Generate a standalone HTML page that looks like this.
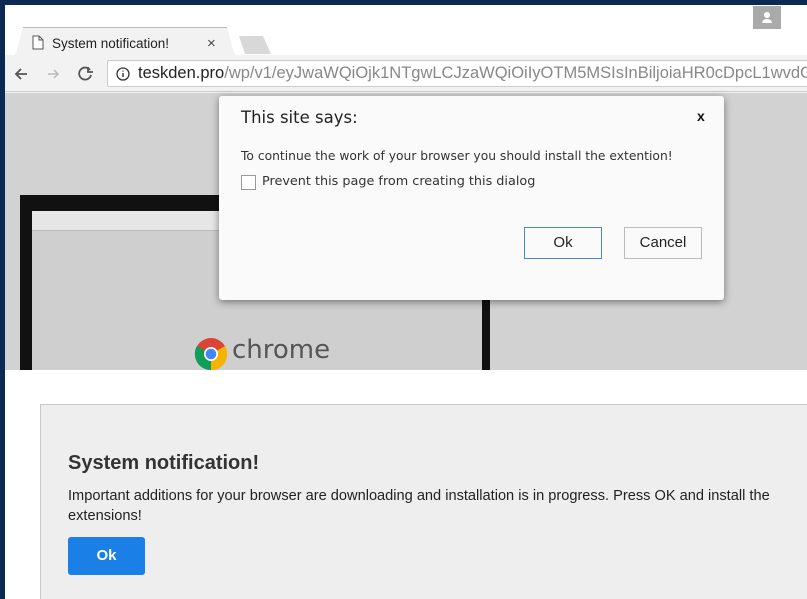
<!DOCTYPE html>
<html><head><style>
*{margin:0;padding:0;box-sizing:border-box}
body{width:807px;height:599px;overflow:hidden;background:#0a2a55;position:relative;font-family:"Liberation Sans",sans-serif}
.win{position:absolute;left:5px;top:5px;right:0;bottom:0;background:#f2f2f2;overflow:hidden}
.tabbar{position:absolute;left:0;top:0;right:0;height:50px;background:#fff}
.tab{position:absolute;left:10px;top:22px;width:220px;height:30px;background:#f2f2f2;border:1px solid #bbb;border-bottom:none;clip-path:polygon(8px 0,212px 0,220px 100%,0 100%)}
.tabtxt{position:absolute;left:47px;top:31px;font-size:13.5px;color:#222}
.tabx{position:absolute;left:202px;top:30px;font-size:15px;color:#444}
.newtab{position:absolute;left:230px;top:31px;width:36px;height:18px;background:#d8d8d8;clip-path:polygon(4px 0,28px 0,36px 100%,10px 100%)}
.prof{position:absolute;left:748px;top:1px;width:28px;height:23px;background:#aaa}
.toolbar{position:absolute;left:0;top:50px;right:0;height:37px;background:#f2f2f2;border-bottom:1px solid #ccc}
.omni{position:absolute;left:102px;top:5px;right:-5px;height:27px;background:#fff;border:1px solid #ccc;border-radius:2px;font-size:16.5px;line-height:25px;padding-left:30px;white-space:nowrap;overflow:hidden;color:#888}
.omni b{font-weight:normal;color:#222}
.page{position:absolute;left:0;top:88px;right:0;bottom:0;background:#d2d2d2}
.laptop{position:absolute;left:15px;top:102px;width:470px;height:200px;background:#111}
.screen{position:absolute;left:12px;top:16px;right:8px;bottom:0;background:#cfcfcf}
.white{position:absolute;left:0;top:277px;right:0;bottom:0;background:#fff}
.box{position:absolute;left:35px;top:34px;right:-5px;bottom:-5px;background:#eee;border:1px solid #c8c8c8}
.box h1{position:absolute;left:27px;top:47px;font-size:20px;font-weight:bold;color:#333}
.box p{position:absolute;left:27px;top:81px;right:5px;font-size:14.6px;line-height:20px;color:#222}
.okb{position:absolute;left:27px;top:132px;width:77px;height:38px;background:#1a7fe6;border-radius:3px;color:#fff;font-weight:bold;font-size:15px;text-align:center;line-height:38px}
.dlg{position:absolute;left:219px;top:96px;width:505px;height:204px;background:#fafafa;border-radius:3px;box-shadow:0 2px 8px rgba(0,0,0,.45);font-family:"DejaVu Sans","Liberation Sans",sans-serif}
.dlg .t{position:absolute;left:22px;top:12px;font-size:16.5px;color:#222}
.dlg .x{position:absolute;left:478px;top:12px;font-size:14px;font-weight:bold;font-family:"Liberation Sans";color:#111}
.dlg .m{position:absolute;left:22px;top:53px;font-size:12.3px;color:#333}
.dlg .cb{position:absolute;left:22px;top:79px;width:15px;height:15px;border:1px solid #999;background:#fff}
.dlg .cl{position:absolute;left:43px;top:78px;font-size:12.8px;color:#333}
.btn{position:absolute;top:131px;height:32px;width:78px;border:1px solid #bbb;background:#fafafa;font-family:"Liberation Sans";font-size:15px;text-align:center;line-height:30px;color:#222}
</style></head><body>
<div class="win">
 <div class="tabbar">
  <div class="tab"></div>
  <svg style="position:absolute;left:27px;top:30px" width="12" height="15"><path d="M1 1h6l4 4v9H1z M7 1v4h4" fill="#fff" stroke="#555"/></svg>
  <div class="tabtxt">System notification!</div>
  <div class="tabx">×</div>
  <div class="newtab"></div>
  <div class="prof"><svg width="28" height="23"><circle cx="14" cy="9" r="3" fill="#fff"/><path d="M9 17a5 4 0 0 1 10 0z" fill="#fff"/></svg></div>
 </div>
 <div class="toolbar">
  <svg style="position:absolute;left:8px;top:10px" width="80" height="18"><path d="M14 9H3M8 4L3 9l5 5" stroke="#555" stroke-width="1.8" fill="none"/><path d="M35 9h10M41 5l4 4-4 4" stroke="#bbb" stroke-width="1.5" fill="none"/><path d="M80 5a6 6 0 1 0 1 5" stroke="#555" stroke-width="1.8" fill="none" transform="translate(-3,0)"/><path d="M75 2v5h5" stroke="#555" stroke-width="1.8" fill="none"/></svg>
  <div class="omni"><svg style="position:absolute;left:8px;top:6px" width="14" height="14"><circle cx="7" cy="7" r="6" stroke="#333" stroke-width="1.3" fill="none"/><path d="M7 6v4M7 3.5v1" stroke="#333" stroke-width="1.4"/></svg><b>teskden.pro</b>/wp/v1/eyJwaWQiOjk1NTgwLCJzaWQiOiIyOTM5MSIsInBiljoiaHR0cDpcL1wvdGRzLm1lZC</div>
 </div>
 <div class="page">
  <div class="laptop"><div class="screen">
   <div style="height:20px;background:#e6e6e6;border-bottom:1px solid #bbb"></div>
   <svg style="position:absolute;left:162px;top:126px" width="34" height="34" viewBox="0 0 34 34"><circle cx="17" cy="17" r="16" fill="#db4437"/><path d="M17 17L3 25A16 16 0 0 0 17 33z" fill="#0f9d58"/><path d="M3 25A16 16 0 0 1 3 9L17 17z" fill="#0f9d58"/><path d="M17 17L31 9A16 16 0 0 1 17 33z" fill="#f4b400"/><circle cx="17" cy="17" r="7" fill="#fff"/><circle cx="17" cy="17" r="5.3" fill="#4285f4"/></svg>
   <div style="position:absolute;left:200px;top:124px;font-size:26px;color:#555;font-family:'DejaVu Sans',sans-serif">chrome</div>
  </div></div>
  <div class="white">
   <div class="box">
    <h1>System notification!</h1>
    <p>Important additions for your browser are downloading and installation is in progress. Press OK and install the extensions!</p>
    <div class="okb">Ok</div>
   </div>
  </div>
 </div>
</div>
<div class="dlg">
 <div class="t">This site says:</div>
 <div class="x">x</div>
 <div class="m">To continue the work of your browser you should install the extention!</div>
 <div class="cb"></div>
 <div class="cl">Prevent this page from creating this dialog</div>
 <div class="btn" style="left:305px;border-color:#4a84d8">Ok</div>
 <div class="btn" style="left:405px">Cancel</div>
</div>
</body></html>
